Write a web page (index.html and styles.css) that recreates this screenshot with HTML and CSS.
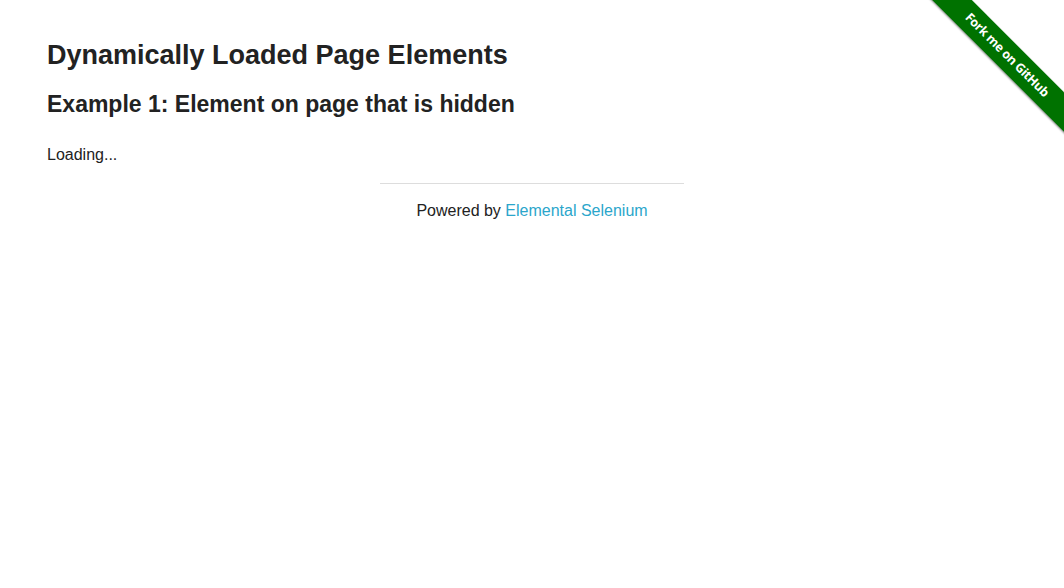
FILE: index.html
```html
<!DOCTYPE html>
<html>
<head>
<meta charset="utf-8">
<title>The Internet</title>
<link rel="stylesheet" href="styles.css">
</head>
<body>
<div class="ribbon-wrap">
  <a class="ribbon" href="#">Fork me on GitHub</a>
</div>
<div class="row">
  <div class="content">
    <h3 class="title">Dynamically Loaded Page Elements</h3>
    <h4 class="subtitle">Example 1: Element on page that is hidden</h4>
    <div class="loading">Loading...</div>
  </div>
</div>
<div class="row">
  <div class="footer">
    <hr class="rule">
    <div class="powered">Powered by <a class="link" href="#">Elemental Selenium</a></div>
  </div>
</div>
</body>
</html>
```
FILE: styles.css
```css
html, body {
  margin: 0;
  padding: 0;
  background: #fff;
}
body {
  font-family: "Liberation Sans", Arial, sans-serif;
  color: #222;
  font-size: 16px;
}
.row {
  max-width: 1000px;
  margin: 0 auto;
}
.content {
  padding: 0 15px;
}
.title {
  font-size: 27px;
  line-height: 1.4;
  font-weight: bold;
  margin: 37px 0 13px;
}
.subtitle {
  font-size: 23px;
  line-height: 1.4;
  font-weight: bold;
  margin: 0 0 22px;
}
.loading {
  line-height: 1.6;
}
.footer {
  width: 333.33px;
  margin: 0 auto;
  padding: 0 15px;
  box-sizing: border-box;
  text-align: center;
}
.rule {
  border: 0;
  border-top: 1px solid #ddd;
  height: 0;
  margin: 15px 0 14px;
}
.powered {
  line-height: 1.6;
}
.link {
  color: #2ba6cb;
  text-decoration: none;
}
.ribbon-wrap {
  position: absolute;
  top: 0;
  right: 0;
  width: 149px;
  height: 149px;
  overflow: hidden;
}
.ribbon {
  position: absolute;
  left: -23px;
  top: 41px;
  width: 230px;
  height: 28px;
  line-height: 28px;
  background: #007200;
  color: #fff;
  text-align: center;
  text-decoration: none;
  font-family: "Open Sans", "Liberation Sans", sans-serif;
  font-weight: bold;
  font-size: 12.5px;
  letter-spacing: -0.3px;
  transform: rotate(45deg);
  box-shadow: 0 1px 2px rgba(0,0,0,0.45);
}
```
